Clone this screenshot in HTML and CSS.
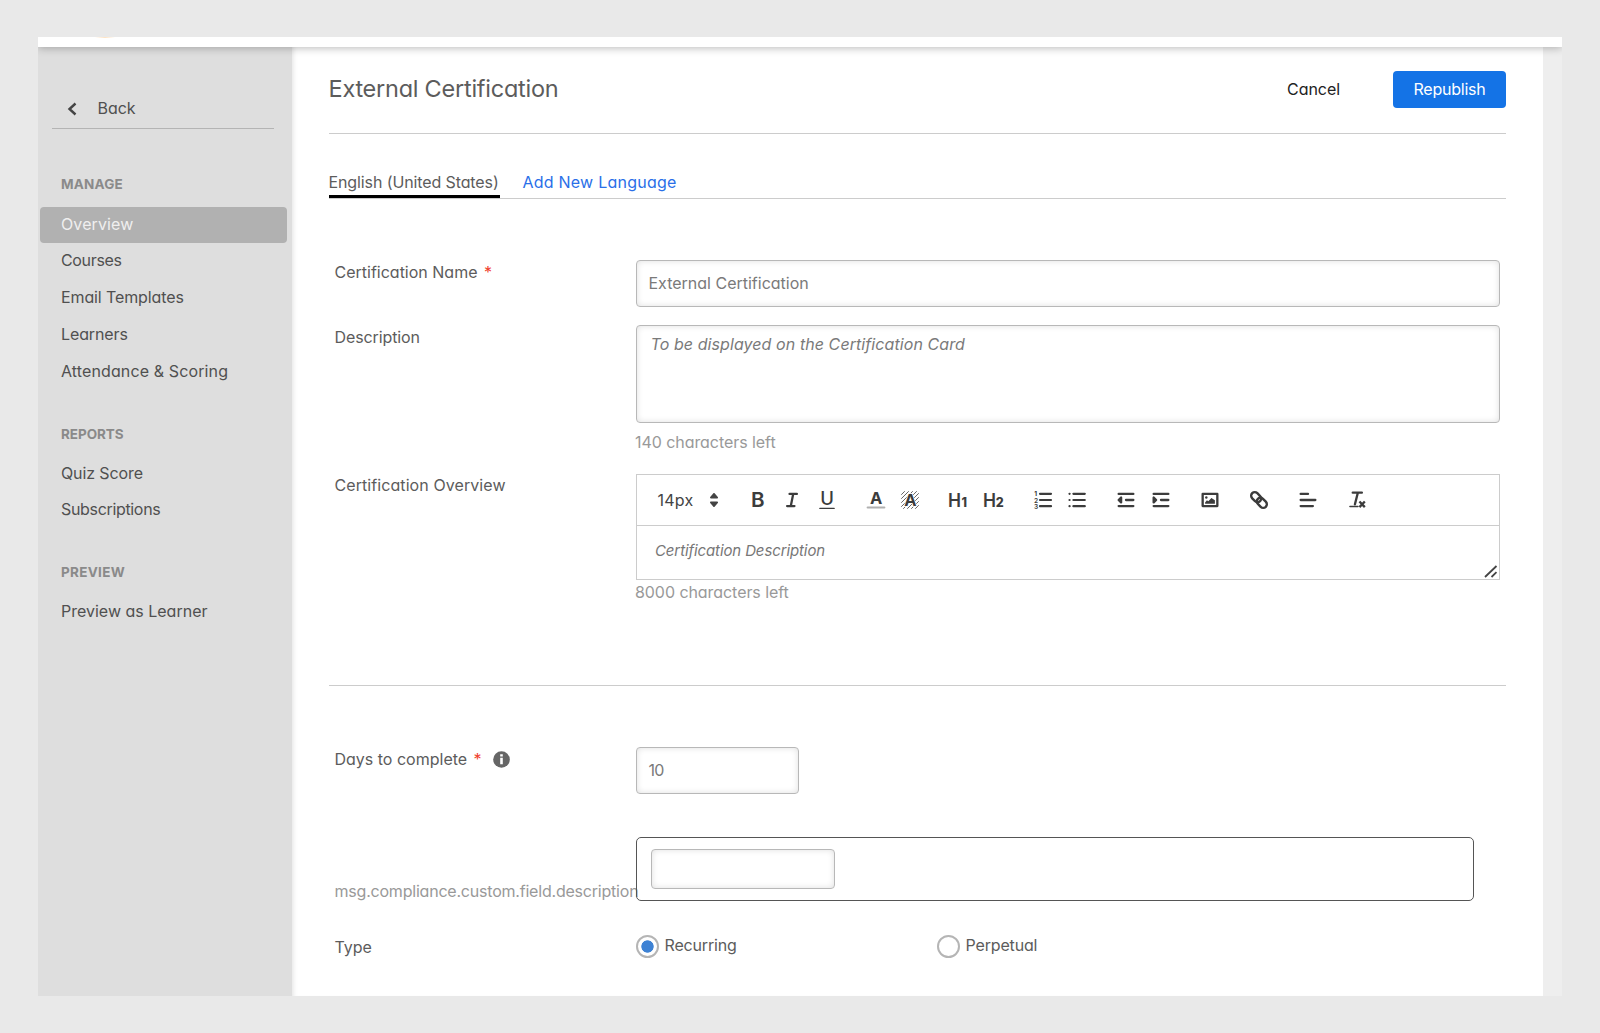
FILE: index.html
```html
<!DOCTYPE html>
<html lang="en">
<head>
<meta charset="utf-8">
<title>External Certification</title>
<link rel="stylesheet" href="styles.css">
</head>
<body>
<div class="window">
  <div class="topbar"><span class="logo-edge"></span></div>
  <div class="body">
    <aside class="sidebar">
      <a class="back">
        <svg width="11" height="14" viewBox="0 0 11 14"><path d="M8.5 1.5 2.5 7l6 5.5" fill="none" stroke="#444" stroke-width="2.4"/></svg>
        <span>Back</span>
      </a>
      <nav>
        <h2 class="ls-m">MANAGE</h2>
        <a class="item active ls-a">Overview</a>
        <a class="item ls-c">Courses</a>
        <a class="item ls-b">Email Templates</a>
        <a class="item ls-b">Learners</a>
        <a class="item ls-a">Attendance &amp; Scoring</a>
        <h2>REPORTS</h2>
        <a class="item ls-b">Quiz Score</a>
        <a class="item ls-c">Subscriptions</a>
        <h2 class="ls-p">PREVIEW</h2>
        <a class="item">Preview as Learner</a>
      </nav>
    </aside>
    <main class="content">
      <header class="head">
        <h1>External Certification</h1>
        <a class="cancel">Cancel</a>
        <button class="publish">Republish</button>
      </header>
      <div class="tabs">
        <a class="tab current ls-b">English (United States)</a>
        <a class="tab add">Add New Language</a>
      </div>
      <section class="form">
        <div class="row name-row">
          <label>Certification Name <i class="req">*</i></label>
          <div class="input">External Certification</div>
        </div>
        <div class="row desc-row">
          <label class="ls-b">Description</label>
          <div>
            <div class="input area">To be displayed on the Certification Card</div>
            <p class="count">140 characters left</p>
          </div>
        </div>
        <div class="row over-row">
          <label class="ls-o">Certification Overview</label>
          <div>
            <div class="editor">
              <div class="toolbar">
                <span class="size">14px
                  <svg width="10" height="14" viewBox="0 0 10 14"><path d="M5 .8 8.2 4.6H1.8zM5 13.2 8.2 9.4H1.8z" fill="#444" stroke="#444" stroke-width="1.6" stroke-linejoin="round"/></svg>
                </span>
                <div class="group">
                  <svg class="ic" viewBox="0 0 22 22"><text x="4" y="18.4" font-size="20" font-weight="600" textLength="13.6" lengthAdjust="spacingAndGlyphs">B</text></svg>
                  <svg class="ic" viewBox="0 0 18 18"><path d="M7 4h6M5 14h6M8 14l2-10"/></svg>
                  <svg class="ic" viewBox="0 0 22 22"><text x="4.200" y="16.200" font-size="18.500" font-weight="500">U</text><path class="thin" d="M3.800 19.400h14.400"/></svg>
                </div>
                <div class="group">
                  <svg class="ic" viewBox="0 0 22 22"><text x="5" y="14.700" font-size="16.500" font-weight="700">A</text><path d="M2.600 18.600h16.800" class="swatch"/></svg>
                  <svg class="ic" viewBox="0 0 22 22"><path class="hatch" d="M2.5 5.5l3-3M2.5 9.5l7-7M2.5 13.5l11-11M2.5 17.5l15-15M4.5 19.5l15-15M8.5 19.5l11-11M12.5 19.5l7-7M16.5 19.5l3-3"/><text x="5.200" y="17" font-size="16.500" font-weight="700" class="halo">A</text></svg>
                </div>
                <div class="group">
                  <svg class="ic" viewBox="0 0 22 22"><text x="0" y="18" font-size="19" font-weight="600" textLength="13" lengthAdjust="spacingAndGlyphs">H</text><text x="13.400" y="18" font-size="12.500" font-weight="800">1</text></svg>
                  <svg class="ic" viewBox="0 0 22 22"><text x="0" y="18" font-size="19" font-weight="600" textLength="13" lengthAdjust="spacingAndGlyphs">H</text><text x="12.800" y="18" font-size="12.500" font-weight="800">2</text></svg>
                </div>
                <div class="group">
                  <svg class="ic" viewBox="0 0 22 22"><path d="M8 4.8h11M8 11h11M8 17.2h11"/><text x="2.2" y="7.4" font-size="6.6" font-weight="700">1</text><text x="2" y="13.6" font-size="6.6" font-weight="600">2</text><text x="2" y="19.8" font-size="6.6" font-weight="600">3</text></svg>
                  <svg class="ic" viewBox="0 0 22 22"><path d="M7.400 4.800h11.400M7.400 11h11.400M7.400 17.200h11.400M3.500 4.800h.1M3.500 11h.1M3.500 17.200h.1"/></svg>
                </div>
                <div class="group">
                  <svg class="ic" viewBox="0 0 18 18"><path d="M3 14h12M3 4h12M9 9h6"/><path class="solid" d="M5 7v4L3 9z"/></svg>
                  <svg class="ic" viewBox="0 0 18 18"><path d="M3 14h12M3 4h12M9 9h6"/><path class="solid" d="M3 7v4l2-2z"/></svg>
                </div>
                <div class="group">
                  <svg class="ic" viewBox="0 0 18 18"><rect x="3" y="4" width="12" height="10"/><circle cx="6" cy="7" r="1" class="dot"/><path class="dot" d="M5 12v-1l1.5-1.7 1.1.8L10.2 7.4 13 9.300V12z"/></svg>
                </div>
                <div class="group">
                  <svg class="ic" viewBox="0 0 22 22"><g transform="rotate(45 11 11)" class="chain"><rect x="1.400" y="7.400" width="11.200" height="7.200" rx="3.600"/><rect x="9.400" y="7.400" width="11.200" height="7.200" rx="3.600"/></g></svg>
                </div>
                <div class="group">
                  <svg class="ic" viewBox="0 0 18 18"><path d="M15 9H3M13 14H3M9 4H3"/></svg>
                </div>
                <div class="group">
                  <svg class="ic" viewBox="0 0 18 18"><path d="M5.500 3H13M9.700 3 7.300 12.500"/><path class="thin" d="M3.200 14.300h6.600"/><path class="cross" d="M11 10.200 15.400 14.800M15.400 10.200 11 14.800"/></svg>
                </div>
              </div>
              <div class="edit-area">Certification Description
                <svg class="grip" width="14" height="13" viewBox="0 0 14 13"><path d="M1 12 12.500 1M7.500 12l5-4.800" fill="none" stroke="#444" stroke-width="1.8"/></svg>
              </div>
            </div>
            <p class="count over-count">8000 characters left</p>
          </div>
        </div>
      </section>
      <hr>
      <section class="form second">
        <div class="row days-row">
          <label>Days to complete <i class="req">*</i>
            <svg class="info" width="17" height="17" viewBox="0 0 17 17"><circle cx="8.500" cy="8.500" r="8.300" fill="#666"/><path d="M8.500 6.700v6.500M8.500 3.300v2.200" stroke="#fff" stroke-width="2.600"/></svg>
          </label>
          <div class="input days">10</div>
        </div>
        <div class="row custom-row">
          <label class="msg">msg.compliance.custom.field.description</label>
          <div class="custom"><div class="input inner"></div></div>
        </div>
        <div class="row type-row">
          <label>Type</label>
          <div class="radios">
            <span class="radio on"><i></i>Recurring</span>
            <span class="radio"><i></i>Perpetual</span>
          </div>
        </div>
      </section>
    </main>
    <div class="gutter"></div>
  </div>
</div>
</body>
</html>
```
FILE: styles.css
```css
* { box-sizing: border-box; }
body {
  margin: 0;
  height: 1033px;
  padding: 37px 38px;
  background: #e9e9e9;
  font: 16px/24px Inter, "Liberation Sans", sans-serif;
  font-feature-settings: "cv11";
  color: #5c5c5c;
  overflow: hidden;
}
h1, h2, p { margin: 0; font-weight: 400; }
.window { display: flex; flex-direction: column; height: 959px; }
.topbar {
  height: 10px;
  background: #fff;
  box-shadow: 0 1px 8px rgba(0, 0, 0, .28);
  clip-path: inset(0 0 -14px 0);
  z-index: 1;
}
.logo-edge {
  display: block;
  width: 20px;
  height: 1px;
  margin-left: 57px;
  background: linear-gradient(90deg, #fff, #fde3c4, #fff);
}
.body { display: flex; flex: 1; min-height: 0; }

.sidebar { width: 254px; background: #dedede; padding-top: 45px; color: #505050; }
.back {
  display: flex;
  align-items: center;
  gap: 19.500px;
  height: 37px;
  margin: 0 18px 0 14px;
  padding: 0 0 5px 15px;
  border-bottom: 1px solid #b4b4b4;
  letter-spacing: -.05px;
}
.back svg { margin-top: 2px; }
.sidebar nav { padding-top: 45px; }
.sidebar h2 {
  margin: 33px 0 12px 23px;
  font-size: 13.500px;
  line-height: 20px;
  font-weight: 700;
  color: #8a8a8a;
  letter-spacing: -.06px;
}
.sidebar h2:first-child { margin: 0 0 12.600px 23px; }
.item {
  display: block;
  height: 36.800px;
  line-height: 35.400px;
  margin: 0 5px 0 2px;
  padding-left: 21px;
  border-radius: 4px;
}
.active { background: #b1b1b1; color: #efefef; line-height: 35px; }
.ls-a { letter-spacing: .12px; }
.ls-b { letter-spacing: -.11px; }
.ls-c { letter-spacing: -.33px; }
.ls-o { letter-spacing: .08px; }
.sidebar .ls-m { letter-spacing: .2px; }
.sidebar .ls-p { letter-spacing: .3px; }

.content {
  width: 1251px;
  padding: 0 37px 0 36.500px;
  background: #fff;
  box-shadow: inset 5px 0 5px -4px rgba(0, 0, 0, .12);
}
.head { display: flex; align-items: center; height: 87px; padding-bottom: 1px; border-bottom: 1px solid #ccc; }
h1 { flex: 1; font-size: 23.500px; line-height: 32px; letter-spacing: -.25px; padding-bottom: 1px; }
.cancel { color: #222; margin-right: 53px; letter-spacing: -.05px; padding-bottom: 1px; }
.publish {
  width: 113px;
  height: 37px;
  padding: 0 0 1px;
  border: 0;
  border-radius: 4px;
  background: #1473e6;
  color: #fff;
  font: inherit;
  font-feature-settings: inherit;
  letter-spacing: -.23px;
}
.tabs { display: flex; gap: 23px; height: 65px; padding-top: 36px; border-bottom: 1px solid #ccc; }
.tab { height: 28px; line-height: 25px; }
.current { width: 171px; border-bottom: 3px solid #000; white-space: nowrap; }
.add { color: #2a6fe8; letter-spacing: .23px; }

.form { padding: 61px 6px 0; }
.row { display: grid; grid-template-columns: 301px 1fr; }
.row label { white-space: nowrap; line-height: 24px; }
.req { color: #f0402c; font-style: normal; margin-left: 2px; }
.input {
  border: 1px solid #b8b8b8;
  border-radius: 4px;
  box-shadow: inset 0 0 6px rgba(0, 0, 0, .13);
  color: #7a7a7a;
  height: 47px;
  padding: 10px 12px;
}
.desc-row { margin-top: 18px; }
.area { height: 98px; padding: 6px 14px; font-style: italic; letter-spacing: .08px; }
.count { color: #999; line-height: 20px; margin: 9px 0 0 -.5px; letter-spacing: -.06px; }
.over-row { margin-top: 22px; }
.over-row label { line-height: 22px; }
.editor { border: 1px solid #ccc; height: 106px; }
.toolbar { display: flex; align-items: center; height: 50px; }
.size { display: flex; align-items: center; width: 110px; padding-left: 21px; gap: 16px; color: #444; letter-spacing: .2px; }
.group { display: flex; gap: 12.500px; margin-right: 27px; }
.ic { width: 22px; height: 22px; overflow: visible; fill: none; stroke: #3c3c3c; stroke-width: 2.200; stroke-linecap: round; stroke-linejoin: round; }
.ic[viewBox="0 0 18 18"] { stroke-width: 1.900; }
.ic text { fill: #3c3c3c; stroke: none; }
.ic .thin { stroke-width: 1.200; }
.ic .swatch { stroke: #b0b0b0; stroke-width: 2; }
.ic .hatch { stroke-width: 1; stroke: #666; }
.ic .halo { stroke: #fff; stroke-width: 1.500; paint-order: stroke; }
.ic .chain { stroke-width: 2.400; }
.ic .cross { stroke-width: 1.900; stroke-linecap: butt; }
.ic .solid { fill: #3c3c3c; }
.ic .dot { fill: #3c3c3c; stroke: none; }
.edit-area {
  position: relative;
  height: 54px;
  padding: 13px 18.500px;
  border-top: 1px solid #ccc;
  color: #777;
  font-size: 15px;
  font-style: italic;
  letter-spacing: -.11px;
}
.grip { position: absolute; right: 1px; bottom: 1px; }
.over-count { margin-top: 2px; }

hr { height: 1px; margin: 83px 0 0; border: 0; background: #ccc; }
.second { padding-top: 61px; }
.days { width: 163px; letter-spacing: -.7px; }
.info { vertical-align: -3px; margin-left: 6.500px; }
.custom-row { margin-top: 43px; }
.msg { align-self: end; margin-bottom: -2px; color: #999; letter-spacing: -.21px; }
.custom { position: relative; width: 838px; height: 64px; padding: 11px 14px; border: 1px solid #555; border-radius: 5px; }
.inner { width: 184px; height: 40px; }
.type-row { margin-top: 34px; }
.radios { display: flex; letter-spacing: -.16px; }
.radio { display: flex; gap: 6px; width: 301px; line-height: 21px; }
.radio i { width: 23px; height: 23px; border: 2px solid #b5b5b5; border-radius: 50%; }
.on i { background: radial-gradient(circle, #3e82d4 5.800px, transparent 6.500px); }
.gutter { flex: 1; background: #eee; }
```
